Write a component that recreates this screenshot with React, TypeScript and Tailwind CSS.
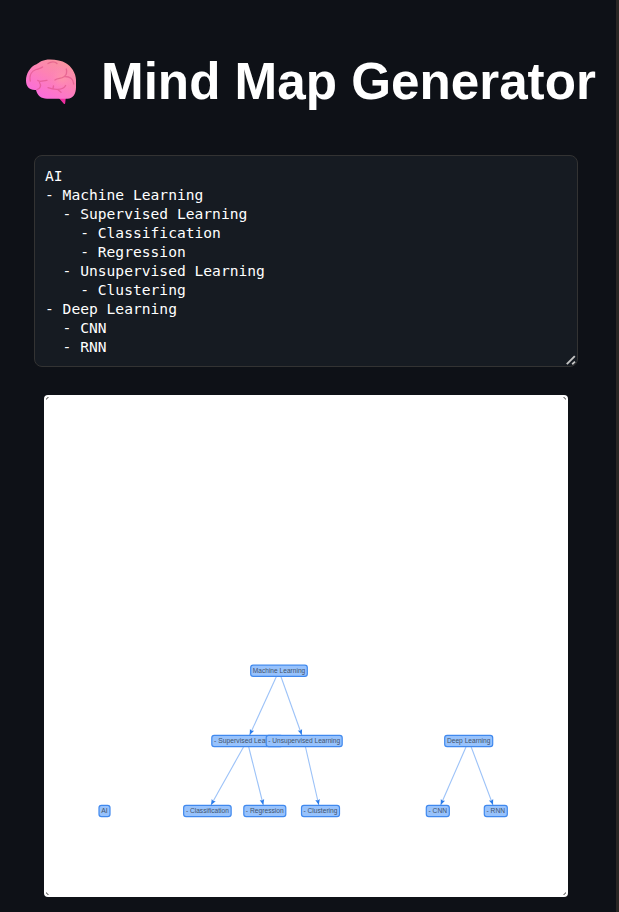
import React, { useState } from "react";

const OUTLINE = `AI
- Machine Learning
  - Supervised Learning
    - Classification
    - Regression
  - Unsupervised Learning
    - Clustering
- Deep Learning
  - CNN
  - RNN`;

type MapNode = { label: string; x: number; y: number; w: number; tw: number };

const NODES: MapNode[] = [
  { label: "AI", x: 60.5, y: 416, w: 11, tw: 6.5 },
  { label: "Machine Learning", x: 235, y: 275.8, w: 56.6, tw: 52.5 },
  { label: "- Supervised Learning", x: 203.3, y: 346, w: 71, tw: 66.5 },
  { label: "- Unsupervised Learning", x: 260.2, y: 346, w: 76, tw: 72 },
  { label: "- Classification", x: 163.4, y: 416, w: 47.5, tw: 43 },
  { label: "- Regression", x: 220.8, y: 416, w: 42, tw: 38 },
  { label: "- Clustering", x: 276.5, y: 416, w: 38, tw: 34 },
  { label: "Deep Learning", x: 424.7, y: 346, w: 48, tw: 43.5 },
  { label: "- CNN", x: 393.8, y: 416, w: 23, tw: 18.5 },
  { label: "- RNN", x: 451.8, y: 416, w: 23, tw: 18.5 },
];

const EDGES = [
  [232.3, 281.8, 205.7, 340],
  [237, 281.8, 257.8, 340],
  [199.5, 352, 167, 410],
  [204.7, 352, 219.3, 410],
  [261.5, 352, 274.8, 410],
  [422, 352, 396.7, 410],
  [427.2, 352, 449, 410],
];

const BRAIN_SHAPE =
  "M25 1.4C18 1.4 14.5 4 11.5 6.3 5 8.5 1 16 1 22.5 1 28.5 4.5 32.5 11 32 12.5 37.5 16 40.7 22 40.7H42.5C48 40.7 51 36 51 29V22C51 15 46 8 41 5.2 37 2.5 31 1.4 25 1.4Z";

function Brain() {
  return (
    <svg className="h-[47px] w-[52px] shrink-0" viewBox="0 0 52 47" fill="none">
      <defs>
        <linearGradient id="lobe" x1="38" y1="3" x2="18" y2="40" gradientUnits="userSpaceOnUse">
          <stop stopColor="#f9949f" />
          <stop offset=".45" stopColor="#fd82b4" />
          <stop offset="1" stopColor="#fb6cdb" />
        </linearGradient>
        <radialGradient id="glow" cx="37" cy="20" r="13" gradientUnits="userSpaceOnUse">
          <stop stopColor="#ff9ca4" stopOpacity=".7" />
          <stop offset="1" stopColor="#ff82c8" stopOpacity="0" />
        </radialGradient>
      </defs>
      <path d="M33 39 38.6 45.4Q40 46.8 40.2 45L41 38Z" fill="#ee2fa0" />
      <path d={BRAIN_SHAPE} fill="url(#lobe)" />
      <path d={BRAIN_SHAPE} fill="url(#glow)" />
      <g stroke="#dc4f83" strokeWidth="1.3" strokeLinecap="round" strokeLinejoin="round" opacity=".6">
        <path d="M5.3 23C4 17 7 13 11 11.5 14 10.5 16 10.5 17.5 9" />
        <path d="M23 5.5C26 3.3 30 3.3 32 5.5" />
        <path d="M41.3 11C42.3 14.5 41.5 17 39 18.7 36 21 33 19.8 30 22M40 18.5C44.5 18.5 48.5 21 48.7 26" />
        <path d="M12 31.5C15.5 30.5 16.5 27.5 14.5 24.5M12.8 22.5C16 25 18.5 22 22 22.3" />
        <path d="M23 29.7C29 32 38 32.5 40.6 27.5M28 30.5 28.5 28M33 31.7 36 34.3" />
      </g>
    </svg>
  );
}

function MindMap() {
  return (
    <svg className="block h-full w-full" viewBox="0 0 524 502">
      {EDGES.map(([x1, y1, x2, y2], i) => {
        const angle = (Math.atan2(y2 - y1, x2 - x1) * 180) / Math.PI;
        return (
          <g key={i}>
            <line x1={x1} y1={y1} x2={x2} y2={y2} stroke="#9cc2f8" strokeWidth="1.1" />
            <path
              d="M0 0-5.6-2.3-4.6 0-5.6 2.3Z"
              fill="#2b7ce9"
              transform={`translate(${x2} ${y2}) rotate(${angle})`}
            />
          </g>
        );
      })}
      {NODES.map((n) => (
        <g key={n.label}>
          <rect
            x={n.x - n.w / 2}
            y={n.y - 5.6}
            width={n.w}
            height="11.2"
            rx="2.4"
            fill="#97c2fc"
            stroke="#4089ee"
            strokeWidth="1.2"
          />
          <text
            x={n.x - n.tw / 2}
            y={n.y + 2.4}
            textLength={n.tw}
            lengthAdjust="spacingAndGlyphs"
            className="fill-[#42526a] font-['Liberation_Sans',Arial,sans-serif] text-[7px]"
          >
            {n.label}
          </text>
        </g>
      ))}
      <path
        d="M2.5 4.5Q2.5 2.5 4.5 2.5M519.5 2.5Q521.5 2.5 521.5 4.5M2.5 497.5Q2.5 499.5 4.5 499.5M519.5 499.5Q521.5 499.5 521.5 497.5"
        stroke="#555"
        fill="none"
      />
    </svg>
  );
}

export default function App() {
  const [text, setText] = useState(OUTLINE);
  return (
    <div className="flex h-[912px] w-[619px] flex-col overflow-hidden border-r-[3px] border-[#292624] bg-[#0e1117]">
      <h1 className="flex h-[155px] shrink-0 items-start pt-[58px] pl-[25px] font-['Liberation_Sans',Arial,sans-serif] text-[51.2px] leading-none font-bold whitespace-nowrap text-white">
        <Brain />
        <span className="-mt-[2px] ml-[24px]">Mind Map Generator</span>
      </h1>
      <div className="relative ml-[34px] h-[212px] w-[544px] shrink-0">
        <textarea
          className="block h-full w-full resize-none overflow-hidden rounded-lg border border-[#333] bg-[#161b22] p-[10px] font-['DejaVu_Sans_Mono',monospace] text-[14.61px] leading-[19px] text-white outline-none"
          value={text}
          spellCheck={false}
          onChange={(e) => setText(e.target.value)}
        />
        <svg className="absolute right-[2px] bottom-[2px] size-[10px]" viewBox="0 0 10 10">
          <path d="M.8 9.2 8.8 1.2M6.2 9.2 9 6.6" stroke="#c4c4c4" strokeWidth="1.9" />
        </svg>
      </div>
      <div className="mt-[28px] ml-[44px] h-[502px] w-[524px] shrink-0 overflow-hidden rounded-[4px] bg-white">
        <MindMap />
      </div>
    </div>
  );
}
